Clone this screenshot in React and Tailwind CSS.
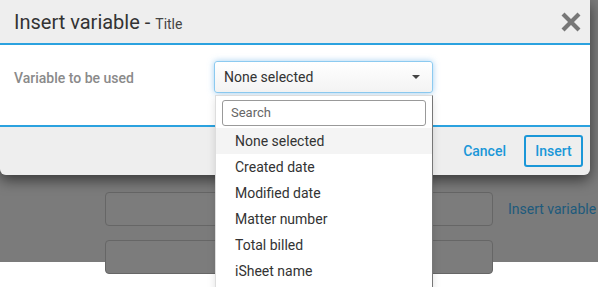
import { useState } from 'react';

const options = ['None selected', 'Created date', 'Modified date', 'Matter number', 'Total billed', 'iSheet name'];

function CloseIcon() {
  return (
    <svg width="20" height="20" viewBox="0 0 20 20">
      <path d="M3.5 3.5 L16.5 16.5 M16.5 3.5 L3.5 16.5" stroke="#777" strokeWidth="4.2" strokeLinecap="square" />
    </svg>
  );
}

export default function App() {
  const [selected] = useState(0);

  return (
    <div className="relative w-[598px] h-[287px] overflow-hidden bg-white font-['Roboto',sans-serif]">
      {/* page behind the modal, dimmed */}
      <div className="h-[262px] bg-[#7b7b7b] pt-[192px]">
        <div className="flex items-center">
          <div className="ml-[105px] w-[388px] h-[34px] rounded-[4px] border border-[#666] bg-[#7c7c7c]" />
          <span className="ml-[15px] text-[14px] text-[#1d5a7c]">Insert variable</span>
        </div>
        <div className="ml-[105px] mt-[14px] w-[388px] h-[34px] rounded-[4px] border border-[#666] bg-[#7c7c7c]" />
      </div>

      {/* modal */}
      <div className="absolute top-0 left-0 w-[590px] rounded-b-[6px] shadow-[0_5px_14px_rgba(0,0,0,0.55)]">
        <div className="h-[45px] bg-[#eeeeee] border-b-2 border-[#2ba2df] flex items-center justify-between pl-[14px] pr-[9px]">
          <h2 className="text-[20px] text-[#333] leading-none pt-[1px]">
            Insert variable - <span className="text-[14px] text-[#444]">Title</span>
          </h2>
          <CloseIcon />
        </div>

        <div className="relative h-[82px] bg-white border-b-2 border-[#2ba2df] flex pt-[16px]">
          <label className="w-[214px] pl-[14px] pt-[7px] text-[14px] font-medium text-[#8a8a8a]">Variable to be used</label>
          <div className="relative">
            <div className="w-[219px] h-[32px] rounded-[3px] border border-[#8ccaf0] bg-gradient-to-b from-white to-[#f3f3f3] shadow-[0_0_6px_rgba(102,175,233,0.6)] flex items-center justify-between pl-[9px] pr-[12px]">
              <span className="text-[14px] text-[#333]">{options[selected]}</span>
              <span className="w-0 h-0 border-l-[4px] border-r-[4px] border-t-[4px] border-l-transparent border-r-transparent border-t-[#444]" />
            </div>
            <div className="absolute z-10 left-[1px] top-[34px] w-[218px] h-[200px] bg-white border-l border-l-[#ddd] border-r border-r-[#777] border-t border-t-[#ddd] shadow-[0_3px_8px_rgba(0,0,0,0.12)]">
              <div className="px-[6px] pt-[4px] pb-[2px]">
                <div className="h-[26px] rounded-[3px] border border-[#999] flex items-center pl-[8px] text-[13px] text-[#666]">Search</div>
              </div>
              <ul>
                {options.map((o, i) => (
                  <li key={o} className={`h-[26px] flex items-center pl-[19px] text-[14px] text-[#333] ${i === selected ? 'bg-[#f4f4f4]' : ''}`}>
                    {o}
                  </li>
                ))}
              </ul>
            </div>
          </div>
        </div>

        <div className="h-[48px] bg-[#eeeeee] rounded-b-[6px] flex items-center justify-end pr-[7px] gap-[18px]">
          <button className="text-[14px] text-[#1a97d8] font-medium">Cancel</button>
          <button className="w-[59px] h-[32px] rounded-[3px] border-2 border-[#1a97d8] text-[14px] text-[#1a97d8] font-medium">Insert</button>
        </div>
      </div>
    </div>
  );
}
